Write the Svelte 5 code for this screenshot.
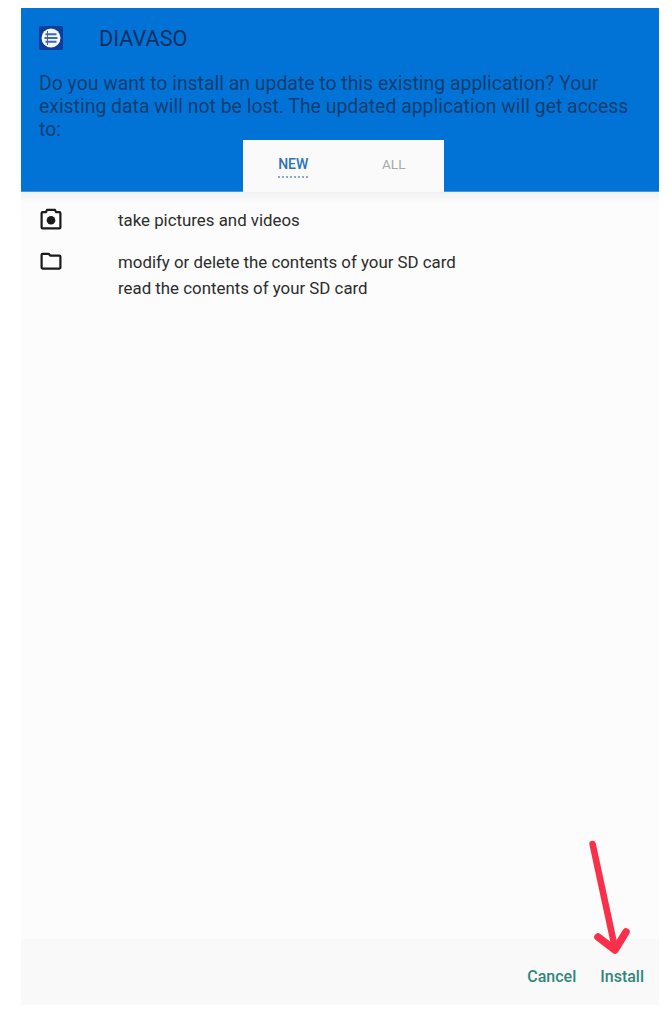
<script lang="ts">
  let tabs = ['NEW', 'ALL'];
  let active = 'NEW';
</script>

<div class="screen">
  <header class="head">
    <div class="title-row">
      <span class="app-icon">
        <svg viewBox="0 0 24 24" width="24" height="24">
          <rect width="24" height="24" rx="2" fill="#0b3d9c" />
          <circle cx="12" cy="12" r="9.5" fill="#f4f7fb" />
          <path d="M6.5 8.2h11M5.5 12h13M6.5 15.8h11" stroke="#3f68b0" stroke-width="2" />
          <path d="M8.5 5v14" stroke="#3f68b0" stroke-width="1" />
        </svg>
      </span>
      <span class="app-name">DIAVASO</span>
    </div>
    <p class="question">
      Do you want to install an update to this existing application? Your existing data will not be lost. The updated application will get access to:
    </p>
    <div class="tabs">
      {#each tabs as tab}
        <div class="tab" class:active={tab === active}>
          <span class="tab-label">{tab}</span>
        </div>
      {/each}
    </div>
  </header>

  <main class="perms">
    <div class="perm">
      <svg class="perm-icon" viewBox="0 0 24 24" width="24" height="24">
        <path d="M8 2.8h8l1 2.4h3.4a1 1 0 0 1 1 1v14.2a1 1 0 0 1-1 1H3.6a1 1 0 0 1-1-1V6.2a1 1 0 0 1 1-1H7z" fill="none" stroke="#1a1a1a" stroke-width="2.2" stroke-linejoin="round" />
        <circle cx="12" cy="13.2" r="4.3" fill="#1a1a1a" />
      </svg>
      <div class="perm-text"><div>take pictures and videos</div></div>
    </div>
    <div class="perm">
      <svg class="perm-icon" viewBox="0 0 24 24" width="24" height="24">
        <path d="M2.6 5.8a1 1 0 0 1 1-1h6l1.6 1.8h9.2a1 1 0 0 1 1 1v11a1 1 0 0 1-1 1H3.6a1 1 0 0 1-1-1z" fill="none" stroke="#1a1a1a" stroke-width="2.2" stroke-linejoin="round" />
      </svg>
      <div class="perm-text">
        <div>modify or delete the contents of your SD card</div>
        <div>read the contents of your SD card</div>
      </div>
    </div>
  </main>

  <footer class="actions">
    <span class="action">Cancel</span>
    <span class="action">Install</span>
  </footer>

  <svg class="arrow" viewBox="0 0 60 120" width="60" height="120">
    <path d="M12.6 4L35 108" fill="none" stroke="#f8304a" stroke-width="6.5" stroke-linecap="round" />
    <path d="M18 97L35 110L46 92" fill="none" stroke="#f8304a" stroke-width="7.5" stroke-linecap="round" stroke-linejoin="round" />
  </svg>
</div>

<style>
  :global(body) {
    margin: 0;
    background: #fff;
  }

  .screen {
    position: relative;
    box-sizing: border-box;
    width: 638px;
    height: 997px;
    margin: 8px 0 0 21px;
    display: flex;
    flex-direction: column;
    background: #fcfcfc;
    font-family: Roboto, "Liberation Sans", sans-serif;
  }

  .head {
    height: 184px;
    flex-shrink: 0;
    box-sizing: border-box;
    padding: 18px 18px 0;
    display: flex;
    flex-direction: column;
    background: #0273d6;
    border-bottom: 1px solid #4a96de;
    color: #123a6e;
  }

  .title-row {
    display: flex;
    align-items: center;
    gap: 36px;
    height: 24px;
  }

  .app-icon {
    display: block;
    height: 24px;
  }

  .app-name {
    font-size: 21.7px;
    font-weight: 400;
    color: #12305f;
  }

  .question {
    margin: 22px 0 0;
    font-size: 19.4px;
    line-height: 23px;
    color: #143e72;
  }

  .tabs {
    position: absolute;
    left: 222px;
    top: 132px;
    width: 201px;
    height: 52px;
    display: flex;
    background: #fafafa;
  }

  .tab {
    flex: 1;
    display: flex;
    justify-content: center;
    padding-top: 16px;
    font-size: 14px;
    font-weight: 500;
    color: #a8a8a8;
  }

  .tab:last-child {
    font-size: 13.5px;
    font-weight: 400;
  }

  .tab-label {
    height: 20px;
    line-height: 17px;
  }

  .tab.active .tab-label {
    color: #2a73b8;
    border-bottom: 2px dotted #8fa8c4;
  }

  .perms {
    flex: 1;
    padding: 15px 0 0 18px;
    background: linear-gradient(#f0f0f0, #fcfcfc 10px);
    font-size: 16.85px;
    line-height: 26px;
    color: #2c2c2c;
  }

  .perm {
    display: flex;
    gap: 55px;
    margin-bottom: 16px;
  }

  .perm-icon {
    flex-shrink: 0;
    margin-top: 0;
  }

  .actions {
    height: 66px;
    flex-shrink: 0;
    box-sizing: border-box;
    display: flex;
    justify-content: flex-end;
    align-items: flex-start;
    gap: 24px;
    padding: 28px 15px 0 0;
    background: #f9f9f9;
  }

  .action {
    font-size: 16px;
    font-weight: 500;
    line-height: 20px;
    color: #31877c;
  }

  .arrow {
    position: absolute;
    left: 559px;
    top: 832px;
  }
</style>
